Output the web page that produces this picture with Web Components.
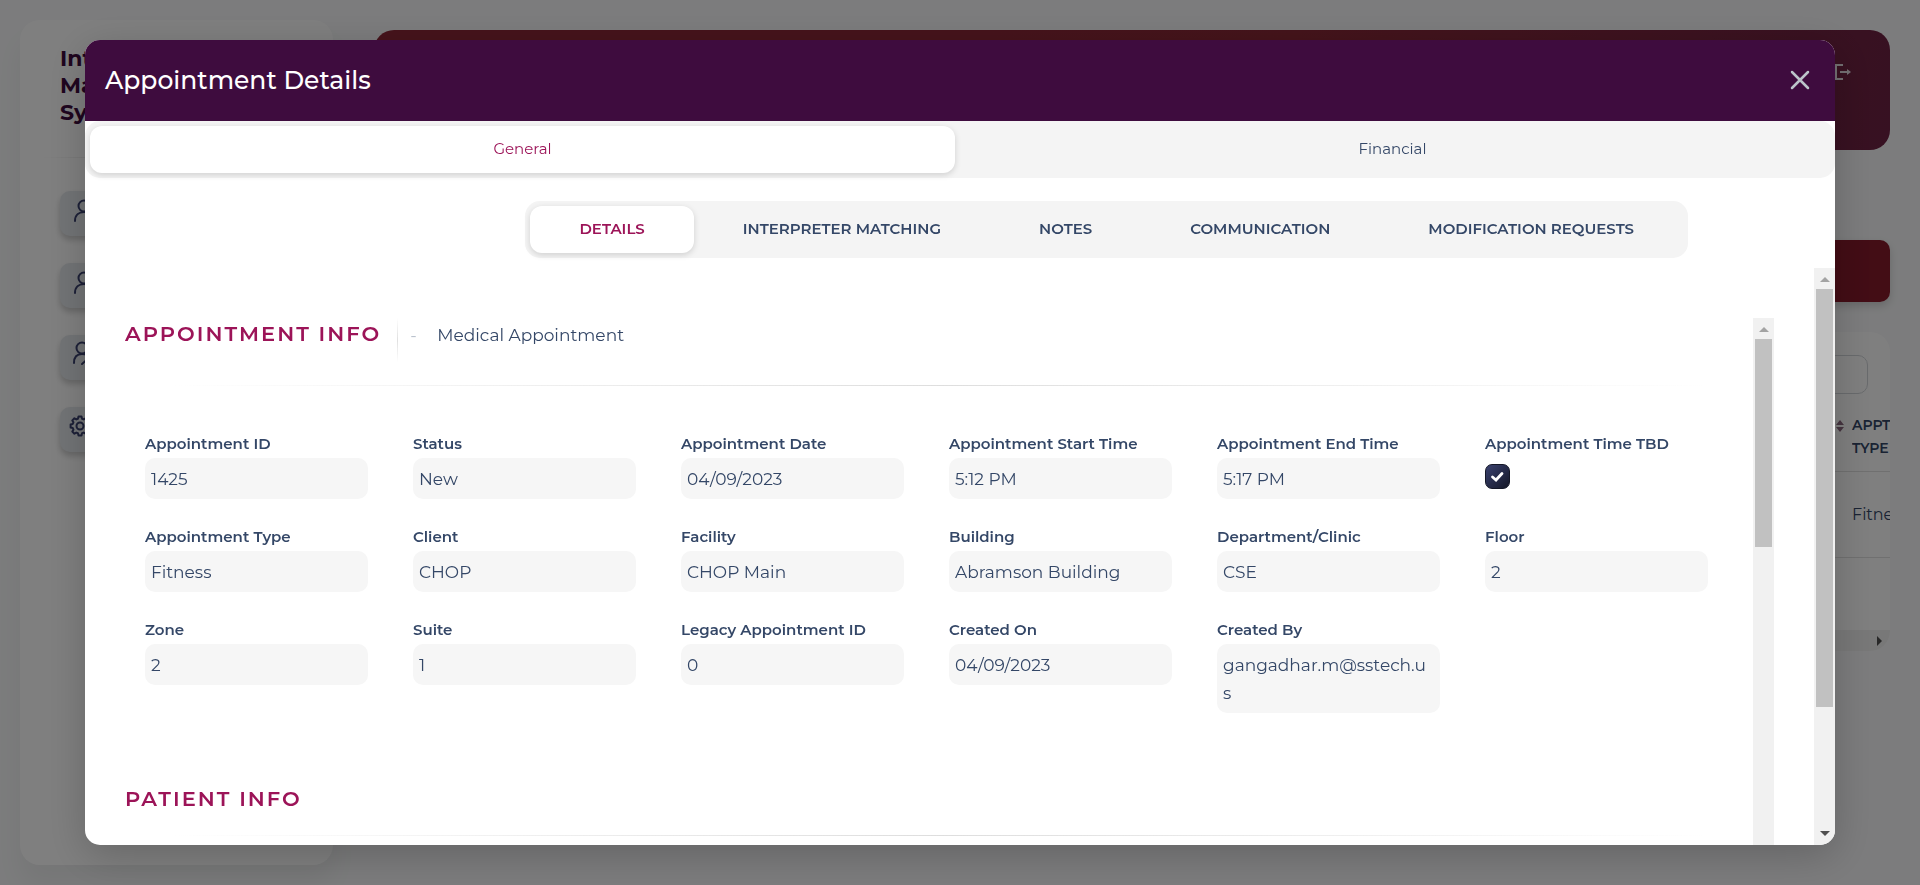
<!DOCTYPE html>
<html lang="en">
<head>
<meta charset="utf-8">
<title>Appointment Details</title>
<style>
html, body { height: 100%; margin: 0; }
body { font-family: Montserrat, Inter, sans-serif; background: #f8f9fa; color: #344767; overflow: hidden; }
</style>
</head>
<body>
<ims-shell>
  <ims-sidebar slot="side"></ims-sidebar>
  <ims-banner></ims-banner>
  <ims-schedule></ims-schedule>
</ims-shell>
<ims-modal heading="Appointment Details">
  <ims-tabs class="primary" fill items="General|Financial" active="General"></ims-tabs>
  <ims-tabs class="secondary" items="DETAILS|INTERPRETER MATCHING|NOTES|COMMUNICATION|MODIFICATION REQUESTS" active="DETAILS"></ims-tabs>
  <ims-details slot="body"></ims-details>
</ims-modal>
<script>
function define(name, render) {
  customElements.define(name, class extends HTMLElement {
    connectedCallback() {
      if (this.shadowRoot) return;
      this.attachShadow({ mode: 'open' }).innerHTML = render(this);
    }
  });
}

define('ims-shell', () => `
<style>
:host { display: flex; height: 100vh; overflow: hidden; box-sizing: border-box; padding: 20px 30px 20px 20px; gap: 41px; }
main { flex: 1; min-width: 0; padding-top: 10px; display: flex; flex-direction: column; }
</style>
<slot name="side"></slot><main><slot></slot></main>`);

const person = '<circle cx="24" cy="15" r="5.500"/><path d="M15 30c0-6 4-9 9-9s9 3 9 9"/>';
const personEdit = '<circle cx="22" cy="13" r="5.500"/><path d="M14 28c0-6 3-9 8-9 2 0 3 0 5 1M22 29l8-7"/>';
// Eight-toothed cog: each tooth rises from the inner to the outer radius and back.
const cog = Array.from({ length: 8 }, (_, i) => [[-16, 7.5], [-9, 9.5], [9, 9.5], [16, 7.5]].map(([off, r]) => {
  const a = (i * 45 + off) * Math.PI / 180;
  return `${(20 + r * Math.cos(a)).toFixed(2)} ${(19 + r * Math.sin(a)).toFixed(2)}`;
}).join('L')).join('L');
const gear = `<circle cx="20" cy="19" r="3.500"/><path d="M${cog}z"/>`;

define('ims-sidebar', () => `
<style>
:host { display: block; flex: none; width: 313px; box-sizing: border-box; padding: 25px 40px; background: #fff; border-radius: 20px; box-shadow: 0 20px 27px rgba(0,0,0,.05); }
h1 { margin: 0; font-size: 22px; line-height: 27px; font-weight: 700; color: #3e0c3e; width: 160px; }
hr { border: 0; height: 1px; margin: 31px -20px 33px; background: linear-gradient(90deg, transparent, #d0d0d0, transparent); }
nav { display: grid; gap: 27px; }
button { display: block; width: 45px; height: 45px; padding: 0; border: 0; border-radius: 10px; background: #e4e8ec; box-shadow: 0 4px 6px rgba(0,0,0,.2); }
svg { display: block; width: 45px; height: 45px; fill: none; stroke: #3a416f; stroke-width: 2; stroke-linecap: round; stroke-linejoin: round; }
</style>
<h1>Interpreter Management System</h1><hr>
<nav>${[person, person, personEdit, gear].map((p, i) => `<button type="button" aria-label="Menu ${i + 1}"><svg viewBox="0 0 45 45">${p}</svg></button>`).join('')}</nav>`);

define('ims-banner', () => `
<style>
:host { display: flex; justify-content: flex-end; box-sizing: border-box; height: 120px; padding: 32px 39px; border-radius: 20px; background: linear-gradient(100deg, #8c2737, #8c2737 40%, #8a2836 60%, #6e2244); }
button { width: 20px; height: 20px; padding: 0; border: 0; background: none; }
svg { display: block; width: 20px; height: 20px; fill: none; stroke: #e8e0e6; stroke-width: 2; }
</style>
<button type="button" aria-label="Sign out"><svg viewBox="0 0 20 20"><path d="M12 3H5v14h7M9 10h8"/><path d="M16 7l4 3-4 3z" fill="#e8e0e6" stroke="none"/></svg></button>`);

define('ims-schedule', () => `
<style>
:host { display: block; margin-top: 90px; }
.action { display: block; width: 100%; height: 62px; border: 0; border-radius: 10px; background: linear-gradient(90deg, #8b1a2c, #861a2b); box-shadow: 0 4px 8px rgba(0,0,0,.16); }
section { margin-top: 30px; background: #fff; border-radius: 20px; overflow: hidden; height: 319px; display: flex; flex-direction: column; }
.tools { display: flex; justify-content: flex-end; padding: 23px 22px 16px; }
.list { flex: 1; }
input { width: 240px; height: 39px; box-sizing: border-box; border: 1px solid #d2d6da; border-radius: 10px; background: #fff; }
table { border-collapse: collapse; width: 100%; table-layout: fixed; }
td, th { padding: 0; text-align: left; overflow: hidden; white-space: nowrap; border-bottom: 1px solid #e0e0e0; }
th { height: 61px; box-sizing: border-box; padding-bottom: 7px; font-size: 14px; line-height: 23px; font-weight: 600; }
td { height: 85px; font-size: 16px; }
.type { width: 38px; }
th.sort { text-align: right; padding-right: 8px; }
svg { width: 8px; height: 12px; fill: #8b6a80; vertical-align: 14px; }
.scroll { height: 21px; background: #f1f1f1; display: flex; align-items: center; justify-content: flex-end; padding-right: 8px; }
i { border: 5px solid transparent; border-left-color: #505050; border-right: 0; }
</style>
<button type="button" class="action" aria-label="New"></button>
<section>
<div class="tools"><input type="text" aria-label="Search"></div>
<div class="list"><table><tr><th class="sort"><svg viewBox="0 0 8 12"><path d="M4 0l4 5H0zM0 7h8L4 12z"/></svg></th><th class="type">APPT<br>TYPE</th></tr><tr><td></td><td class="type">Fitness</td></tr></table></div>
<div class="scroll"><i></i></div>
</section>`);

define('ims-modal', host => `
<style>
:host { position: fixed; inset: 0; box-sizing: border-box; padding: 40px 85px; background: rgba(0,0,0,.5); display: flex; }
dialog { position: static; flex: 1; width: auto; height: auto; min-width: 0; max-width: none; max-height: none; margin: 0; padding: 0; border: 0; display: flex; flex-direction: column; background: #fff; color: inherit; border-radius: 15px; overflow: hidden; box-shadow: 0 10px 40px rgba(0,0,0,.2); }
header { display: flex; align-items: center; justify-content: space-between; height: 81px; flex: none; box-sizing: border-box; padding: 0 25px 2px 20px; background: #3e0c3e; color: #fff; }
h2 { margin: 0; font-size: 25px; line-height: 32px; font-weight: 500; }
button { width: 20px; height: 20px; padding: 0; border: 0; background: none; }
svg { display: block; width: 20px; height: 20px; stroke: #bcc4ca; stroke-width: 2.500; stroke-linecap: round; }
::slotted(.secondary) { margin: 23px 147px 0 auto; }
.body { flex: 1; min-height: 0; margin-top: 10px; display: flex; overflow: hidden; }
::slotted(ims-details) { flex: 1; min-width: 0; }
</style>
<dialog open aria-label="${host.getAttribute('heading')}">
<header><h2>${host.getAttribute('heading')}</h2><button type="button" aria-label="Close"><svg viewBox="0 0 20 20"><path d="M2 2l16 16M18 2L2 18"/></svg></button></header>
<slot></slot>
<div class="body"><slot name="body"></slot><ims-scrollbar style="--thumb:418px" down></ims-scrollbar></div>
</dialog>`);

define('ims-tabs', host => `
<style>
:host { display: flex; flex: none; height: 57px; box-sizing: border-box; padding: 5px; border-radius: 15px; background: #f4f4f4; }
button { font: inherit; font-size: 15px; line-height: 20px; font-weight: 600; color: #344767; border: 0; background: none; padding: 0 49px 2px; border-radius: 12px; white-space: nowrap; }
:host([fill]) button { flex: 1; font-weight: 400; }
:host([fill]) { padding-right: 10px; gap: 5px; }
button[aria-selected=true] { background: #fff; color: #9c1458; box-shadow: 0 2px 6px rgba(0,0,0,.15); }
</style>
${host.getAttribute('items').split('|').map(t => `<button type="button" role="tab" aria-selected="${t === host.getAttribute('active')}">${t}</button>`).join('')}`);

define('ims-scrollbar', host => `
<style>
:host { display: flex; flex: none; flex-direction: column; align-items: center; width: 21px; background: #f1f1f1; }
.arrow { flex: none; box-sizing: border-box; height: 21px; display: flex; align-items: center; }
.up { padding-top: 2px; }
.down { padding-bottom: 2px; }
i { border: 5px solid transparent; }
.up i { border-top: 0; border-bottom-color: #a3a3a3; }
.down i { border-bottom: 0; border-top-color: #505050; }
.thumb { width: 17px; height: var(--thumb); background: #c1c1c1; }
.rest { flex: 1; }
</style>
<div class="arrow up"><i></i></div><div class="thumb"></div><div class="rest"></div>${host.hasAttribute('down') ? '<div class="arrow down"><i></i></div>' : ''}`);

define('ims-field', host => `
<style>
:host { display: block; min-width: 0; }
label { display: block; font-size: 15px; line-height: 28px; font-weight: 600; white-space: nowrap; }
output { display: block; box-sizing: border-box; min-height: 41px; padding: 7px 7px 6px 6px; border-radius: 10px; background: #f6f6f6; font-size: 17px; line-height: 28px; overflow-wrap: anywhere; }
input { appearance: none; display: block; width: 25px; height: 25px; margin: 6px 0 0; border: 1px solid #141727; border-radius: 7px; background: url("data:image/svg+xml,%3Csvg xmlns='http://www.w3.org/2000/svg' viewBox='0 0 23 23'%3E%3Cpath d='M6.500 12l3.500 3 6-6.500' fill='none' stroke='white' stroke-width='2.800' stroke-linecap='round'/%3E%3C/svg%3E"), linear-gradient(135deg, #3a416f, #141727); }
</style>
<label for="v">${host.getAttribute('label')}</label>
${host.hasAttribute('check') ? '<input id="v" type="checkbox" checked>' : '<output id="v"><slot></slot></output>'}`);

define('ims-section-title', () => `
<style>
:host { display: block; }
.row { display: flex; align-items: flex-start; margin-bottom: var(--space); }
h3 { margin: 0; font-size: 21px; line-height: 32px; font-weight: 600; letter-spacing: 2px; color: #9c1458; text-transform: uppercase; }
hr { border: 0; height: 1px; margin: 0; background: linear-gradient(90deg, transparent 3%, #dedede, transparent 97%); }
</style>
<div class="row"><h3><slot></slot></h3><slot name="note"></slot></div><hr>`);

define('ims-details', () => {
  const rows = [['Appointment ID', '1425'], ['Status', 'New'], ['Appointment Date', '04/09/2023'], ['Appointment Start Time', '5:12 PM'], ['Appointment End Time', '5:17 PM'], ['Appointment Time TBD', null],
    ['Appointment Type', 'Fitness'], ['Client', 'CHOP'], ['Facility', 'CHOP Main'], ['Building', 'Abramson Building'], ['Department/Clinic', 'CSE'], ['Floor', '2'],
    ['Zone', '2'], ['Suite', '1'], ['Legacy Appointment ID', '0'], ['Created On', '04/09/2023'], ['Created By', 'gangadhar.m@sstech.us']];
  return `
<style>
:host { display: flex; box-sizing: border-box; padding: 50px 40px 0; }
.content { flex: 1; min-width: 0; overflow: hidden; }
.note { display: flex; height: 44px; margin-left: 16px; padding-left: 13px; background: linear-gradient(transparent, #e0e0e0, transparent) left / 1px 100% no-repeat; gap: 20px; font-size: 17px; line-height: 34px; }
.note span { width: 7px; color: #b8c0cc; }
.first { padding-bottom: 44px; }
.grid { display: grid; grid-template-columns: repeat(6, minmax(0, 1fr)); gap: 24px 45px; padding: 0 45px 0 20px; align-items: start; }
.patient { margin-top: 70px; }
</style>
<div class="content">
<ims-section-title class="first" style="--space:23px">Appointment Info<div slot="note" class="note"><span>-</span>Medical Appointment</div></ims-section-title>
<div class="grid">${rows.map(([l, v]) => v === null ? `<ims-field label="${l}" check></ims-field>` : `<ims-field label="${l}">${v}</ims-field>`).join('')}</div>
<ims-section-title class="patient" style="--space:20px">Patient Info</ims-section-title>
</div>
<ims-scrollbar style="--thumb:208px"></ims-scrollbar>`;
});
</script>
</body>
</html>
